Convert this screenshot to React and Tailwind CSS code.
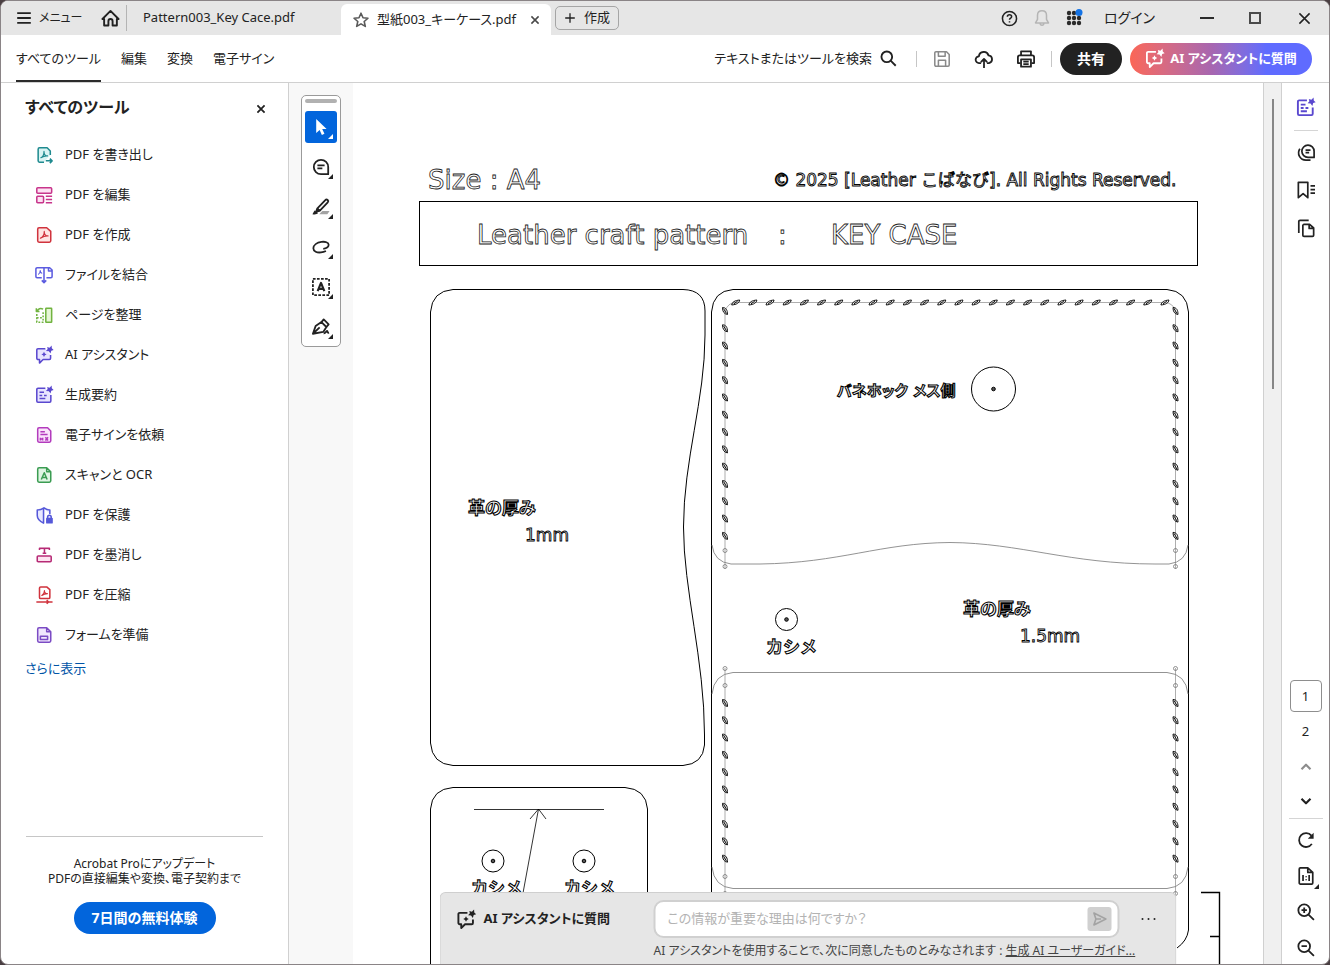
import { useState } from "react";
import clsx from "clsx";

const acrobatMark = <path d="M6 13.500c2.500-1.200 4.300-4.500 4.300-7.500 0 3 1.700 5 4.200 5-3.200-.3-5.700.8-8.500 2.500z" strokeWidth="1.300" />;

const sparkle = (
  <path
    d="M13.500 1l2.700.9L18.500-.5l.2 3 2 2-2.600.8-.9 3-1.900-2.500-3.100-.2 1.900-2.300z"
    fill="currentColor"
    stroke="none"
  />
);

const ICONS = {
  export: (
    <>
      <path d="M17 10V5.500L13.500 2H5a1.500 1.500 0 0 0-1.500 1.500v13A1.500 1.500 0 0 0 5 18h5" />
      <path d="M6.500 13c2-1 3.500-4 3.500-7 0 3 1.500 5 4 5-3-.5-5 .5-7.500 2z" strokeWidth="1.300" />
      <path d="M12 16.500h7M16.500 14l2.500 2.500-2.500 2.500" />
    </>
  ),
  edit: (
    <>
      <rect x="2" y="2" width="16.500" height="6" rx="1" />
      <rect x="2" y="11.500" width="7.500" height="7" rx="1" />
      <path d="M12 11.500h7M12 15h7M12 18.500h7" />
    </>
  ),
  create: (
    <>
      <path d="M3 3.500A1.500 1.500 0 0 1 4.500 2H13l4.500 4v10.500A1.500 1.500 0 0 1 16 18H4.500A1.500 1.500 0 0 1 3 16.500z" />
      {acrobatMark}
    </>
  ),
  combine: (
    <>
      <path d="M7.500 13H2.300A1.300 1.300 0 0 1 1 11.700V3.300A1.300 1.300 0 0 1 2.300 2h14L19 4.500v7.200a1.300 1.300 0 0 1-1.300 1.300h-5M10 2v16.500M7.500 16l2.500 2.500 2.500-2.500M15 2v3.500h3.500" />
      <path d="M3.500 9.500c1.500-.8 2.300-2.500 2.300-4.500 0 2 1 3 2.200 3" strokeWidth="1.200" />
    </>
  ),
  organize: (
    <>
      <rect x="12" y="2.500" width="6.500" height="15.500" rx=".5" fill="#e6f6d6" />
      <path d="M9 3.500C6 2 3.500 3 2.500 5.500M1.500 2.500v3.500h3.500" />
      <path d="M2 9v9h8M9 7v11" strokeDasharray="2 1.600" />
      <path d="M2 13h7" strokeDasharray="2 1.600" />
    </>
  ),
  assistant: (
    <>
      <path d="M11.500 3H3.300A1.300 1.300 0 0 0 2 4.300v9.400A1.300 1.300 0 0 0 3.300 15H5v4l4-4h7a1.300 1.300 0 0 0 1.300-1.300V10" />
      <path d="M10 6.500l1 1.900 1.900 1-1.900 1-1 1.900-1-1.900-1.900-1 1.900-1z" fill="currentColor" stroke="none" />
      {sparkle}
    </>
  ),
  summary: (
    <>
      <path d="M11.500 2.500H3.300A1.300 1.300 0 0 0 2 3.800v12.900A1.300 1.300 0 0 0 3.300 18h13a1.300 1.300 0 0 0 1.300-1.300V10" />
      <path d="M5 7h5M5 10.500h3M10 10.500h3M5 14h6.500" />
      {sparkle}
    </>
  ),
  sign: (
    <>
      <path d="M3 3.500A1.500 1.500 0 0 1 4.500 2H14l3.500 3.500v11A1.500 1.500 0 0 1 16 18H4.500A1.500 1.500 0 0 1 3 16.500z" />
      <path d="M6 6.500h5M6 9.500h8M6 13v3M8.500 13v3M8.500 14.500H6M11.500 12.500l3 3.500M14.500 12.500l-3 3.500" />
    </>
  ),
  scan: (
    <>
      <path d="M3 3.500A1.500 1.500 0 0 1 4.500 2H13l4.500 4.500v10A1.500 1.500 0 0 1 16 18H4.500A1.500 1.500 0 0 1 3 16.500zM13 2v4.500h4.500" />
      <path d="M7 15l3.300-7.500L13.500 15M8.200 12.800h4" />
    </>
  ),
  protect: (
    <>
      <path d="M16.500 9V4.500C14 4.500 12 3.500 10 2 8 3.500 5.500 4.500 2.500 4.500v6c0 4 3 6.500 7 8.500V2.500" />
      <path d="M14 13.500v-1.200a2 2 0 0 1 4 0v1.200" />
      <rect x="12.300" y="13" width="7.500" height="6.500" rx="1" fill="currentColor" stroke="none" />
    </>
  ),
  redact: (
    <>
      <path d="M5 4.500V2.500h11v2M10.500 2.500V8M8.500 8h4" />
      <rect x="2.500" y="11" width="15.500" height="6.500" rx="1" />
    </>
  ),
  compress: (
    <>
      <path d="M5 2.300A1.300 1.300 0 0 1 6.300 1H13L16.500 4v8.700a1.300 1.300 0 0 1-1.300 1.300H6.300A1.300 1.300 0 0 1 5 12.700z" />
      <path d="M7.500 10.500c2-1 3-3.200 3-5.500 0 2.300 1.300 3.500 3.300 3.500-2.500 0-4.300.7-6.300 2z" strokeWidth="1.200" />
      <path d="M1.500 17.700h18M13 15.700l2 2-2 2" />
    </>
  ),
  form: (
    <>
      <path d="M3 3.500A1.500 1.500 0 0 1 4.500 2H13l4.500 4.500v10A1.500 1.500 0 0 1 16 18H4.500A1.500 1.500 0 0 1 3 16.500zM13 2v4.500h4.500" />
      <rect x="6" y="11.500" width="8" height="3.500" />
    </>
  ),
  menu: <path d="M1.500 4h17M1.500 10h17M1.500 16h17" />,
  home: <path d="M1.500 10.500L10 2l8.500 8.500h-1.800v6.800h-4.500v-4.500a2.200 2.200 0 0 0-4.400 0v4.500H3.300v-6.800z" />,
  star: <path d="M10 1.500l2.500 5.700 6.200.6-4.700 4.100 1.400 6.100L10 14.800 4.600 18 6 11.900 1.300 7.800l6.200-.6z" />,
  close: <path d="M4 4l12 12M16 4L4 16" />,
  plus: <path d="M10 2v16M2 10h16" />,
  help: (
    <>
      <circle cx="10" cy="10" r="8.300" />
      <path d="M7.500 7.800C7.500 6.500 8.600 5.600 10 5.600s2.500.9 2.500 2.200c0 1.700-2.500 1.800-2.500 3.700M10 13.300v1.500" />
    </>
  ),
  bell: <path d="M10 2c-3 0-5 2-5 5v4.500L2.800 15.500h14.400L15 11.500V7c0-3-2-5-5-5zM8 15.800a2 2.200 0 0 0 4 0" />,
  search: (
    <>
      <circle cx="8" cy="8" r="6.300" />
      <path d="M12.500 12.500l6 6" />
    </>
  ),
  save: (
    <>
      <path d="M2 3.300A1.300 1.300 0 0 1 3.300 2H15l3 3v11.700a1.300 1.300 0 0 1-1.300 1.300H3.300A1.300 1.300 0 0 1 2 16.700z" />
      <path d="M6 2v5h7.500V2M6 18v-6.500h8V18" />
    </>
  ),
  cloud: (
    <>
      <path d="M6.800 14.500H4.500a3.700 3.700 0 0 1-.2-7.400A5.500 5.500 0 0 1 15 6a4.300 4.300 0 0 1 .5 8.500H13.200" />
      <path d="M10 20v-9.500M6.500 13.500L10 10l3.500 3.500" />
    </>
  ),
  print: (
    <>
      <path d="M4.500 6V1.500h11V6M4 14.500H1V8a2 2 0 0 1 2-2h14a2 2 0 0 1 2 2v6.500H16" />
      <path d="M4.500 10.500h11v8h-11zM7 13h6M7 15.700h6" />
    </>
  ),
  comment: (
    <>
      <path d="M18 18h-8a8 8 0 1 1 8-8z" />
      <path d="M6 8.200h8M6 11.500h5.500" />
    </>
  ),
  highlight: (
    <>
      <path d="M8 18h9l2.500-3.500h-8z" fill="#a3a3a3" stroke="none" />
      <path d="M6 11.500L14.800 2.300a1.700 1.700 0 0 1 2.700 2.500L8.500 14.200zM6 11.500l-1.500 3.500 4-.8" />
      <path d="M.5 18l2.300-4.200 4.200 3c-1.500 1.500-4 2-6.500 1.200z" fill="currentColor" stroke="none" />
    </>
  ),
  lasso: <path d="M12.500 12c3.500-.5 6-2 6-4.500 0-2.700-4-3.700-8-3.200C5.500 5 1.500 7.800 1.500 11.500c0 3.500 4 5 8.500 4.500 2-.2 4-.8 5.500-1.500" />,
  textbox: (
    <>
      <rect x="1" y="1" width="18" height="18" strokeDasharray="3 1.500" />
      <path d="M6.300 14.500l3.700-9 3.700 9M7.700 12h4.600" strokeWidth="2.400" />
    </>
  ),
  pen: (
    <>
      <path d="M1 17.500L4 9l6.500-4.500 5.500 5.500-3.500 5.500zM1 17.500L8.500 10.500" />
      <path d="M10.500 4.500L13 1.500 18.500 7 16 10M13 17c2 .5 3-3 4-2.500s-.5 2.500 2 2" />
    </>
  ),
  comments: (
    <>
      <path d="M19 16h-6.700A6.800 6.800 0 1 1 19 9.200z" />
      <path d="M9.500 7.800h5.500M9.500 10.800h4M3.200 6.500C-.5 12 3.500 19 10 19h5" />
    </>
  ),
  bookmark: <path d="M1.500 1.500h10.500v17l-5.200-4.500-5.300 4.500zM15 5.500h5M15 9.500h5M15 13.500h5" />,
  pages: (
    <>
      <path d="M6.500 7.300A1.300 1.300 0 0 1 7.800 6H14l4.500 4v8a1.300 1.300 0 0 1-1.300 1.300H7.800A1.300 1.300 0 0 1 6.500 18zM13.500 6v4.500h5" />
      <path d="M2 15.500V2.800a1.300 1.300 0 0 1 1.300-1.300H13" />
    </>
  ),
  up: <path d="M5 12.500l5-5 5 5" />,
  down: <path d="M5 7.500l5 5 5-5" />,
  rotate: (
    <>
      <path d="M16.500 14.300A7.700 7.700 0 1 1 16 5.200" />
      <path d="M18.500 2v6.500H12z" fill="currentColor" stroke="none" />
    </>
  ),
  actual: (
    <>
      <path d="M2.500 2.300A1.300 1.300 0 0 1 3.800 1H12l5.500 5v11.700a1.300 1.300 0 0 1-1.300 1.300H3.800a1.300 1.300 0 0 1-1.300-1.300zM12 1v5h5.500" />
      <path d="M6.700 9v6.500M13.500 9v6.500M10.200 10.200v1.300M10.200 13.500v1.300" />
    </>
  ),
  zoomIn: (
    <>
      <circle cx="8" cy="8" r="6.500" />
      <path d="M12.800 12.800l6 6M5 8h6M8 5v6" />
    </>
  ),
  zoomOut: (
    <>
      <circle cx="8" cy="8" r="6.500" />
      <path d="M12.800 12.800l6 6M5 8h6" />
    </>
  ),
  send: <path d="M3 2.500l15 7.500-15 7.500 2.500-7.500zM5.500 10H12" />
};

function Icon({ name, className = "size-5", fill = "none", weight = 1.7 }) {
  return (
    <svg
      viewBox="0 0 20 20"
      className={clsx("shrink-0 overflow-visible", className)}
      fill={fill}
      stroke="currentColor"
      strokeWidth={weight}
      strokeLinejoin="round"
      aria-hidden="true"
    >
      {ICONS[name]}
    </svg>
  );
}

const tools = [
  { label: "PDF を書き出し", icon: "export", color: "text-[#1f8a8f]", fill: "#d9f4f3" },
  { label: "PDF を編集", icon: "edit", color: "text-[#c8358b]", fill: "#fde3f3" },
  { label: "PDF を作成", icon: "create", color: "text-[#d0333d]", fill: "#ffe5e3" },
  { label: "ファイルを結合", icon: "combine", color: "text-[#5c5ce0]", fill: "none" },
  { label: "ページを整理", icon: "organize", color: "text-[#71b340]", fill: "none" },
  { label: "AI アシスタント", icon: "assistant", color: "text-[#5a48cf]", fill: "#e7e4ff" },
  { label: "生成要約", icon: "summary", color: "text-[#5a48cf]", fill: "#e7e4ff" },
  { label: "電子サインを依頼", icon: "sign", color: "text-[#b33bbd]", fill: "#fae4fb" },
  { label: "スキャンと OCR", icon: "scan", color: "text-[#3b9c52]", fill: "#e0f5e3" },
  { label: "PDF を保護", icon: "protect", color: "text-[#5558d9]", fill: "#e8e9ff" },
  { label: "PDF を墨消し", icon: "redact", color: "text-[#b62a75]", fill: "#fde3f0" },
  { label: "PDF を圧縮", icon: "compress", color: "text-[#d0333d]", fill: "none" },
  { label: "フォームを準備", icon: "form", color: "text-[#7b4bc4]", fill: "#f0e6fd" }
];

const quickTools = [
  { icon: "comment", label: "コメント" },
  { icon: "highlight", label: "ハイライト" },
  { icon: "lasso", label: "描画" },
  { icon: "textbox", label: "テキスト" },
  { icon: "pen", label: "署名" }
];

function Corner({ className }) {
  return (
    <svg viewBox="0 0 5 5" className={clsx("absolute size-[5px]", className)} fill="currentColor" aria-hidden="true">
      <path d="M5 0v5H0z" />
    </svg>
  );
}

function TitleBar() {
  return (
    <header className="flex h-[34px] shrink-0 items-center bg-[#e6e6e6] text-[13px] whitespace-nowrap">
      <button className="ml-[15px] flex w-[71px] items-center gap-[7px]">
        <Icon name="menu" className="size-4" weight={2.2} />
        <span className="text-xs">メニュー</span>
      </button>
      <button aria-label="ホーム" className="ml-3.5">
        <Icon name="home" className="size-[19px]" weight={2} />
      </button>
      <div className="ml-1.5 h-[26px] w-px bg-[#b4b4b4]" />
      <button className="w-[214px] pl-4 text-left">Pattern003_Key Cace.pdf</button>
      <div className="flex h-full items-end pt-[3px]">
        <div className="flex h-full w-[210px] items-center rounded-t-md bg-white pr-2.5 pl-3">
          <Icon name="star" className="mr-2 size-4 text-[#5a5a5a]" weight={2} />
          <span>型紙003_キーケース.pdf</span>
          <button aria-label="閉じる" className="ml-auto">
            <Icon name="close" className="size-3 text-[#4a4a4a]" weight={2.6} />
          </button>
        </div>
      </div>
      <button className="ml-1 flex h-6 w-16 items-center justify-center gap-2 rounded-[5px] border border-[#a5a5a5]">
        <Icon name="plus" className="size-3" weight={2.2} />
        作成
      </button>
      <div className="ml-auto flex items-center">
        <button aria-label="ヘルプ" className="w-8">
          <Icon name="help" className="mx-auto size-[17px]" weight={1.8} />
        </button>
        <button aria-label="通知" className="w-8 text-[#b5b5b5]">
          <Icon name="bell" className="mx-auto size-[18px]" />
        </button>
        <button aria-label="アプリ" className="w-8">
          <svg viewBox="0 0 18 18" className="mx-auto size-[18px]" aria-hidden="true">
            {[4, 9, 14].map((y) => [4, 9, 14].map((x) => (
              <circle key={`${x}-${y}`} cx={x} cy={y} r="2.200" fill="#2b2b2b" />
            )))}
            <circle cx="14" cy="3.500" r="3.500" fill="#1473e6" />
          </svg>
        </button>
        <button className="ml-3.5 text-sm">ログイン</button>
        <button aria-label="最小化" className="ml-7 flex w-12 justify-center">
          <span className="h-0.5 w-3.5 bg-[#2b2b2b]" />
        </button>
        <button aria-label="最大化" className="flex w-12 justify-center">
          <span className="size-3 border-2 border-[#4a4a4a]" />
        </button>
        <button aria-label="ウィンドウを閉じる" className="flex w-[50px] justify-center">
          <Icon name="close" className="size-[17px]" weight={1.8} />
        </button>
      </div>
    </header>
  );
}

function Toolbar() {
  return (
    <div className="flex h-12 shrink-0 items-center border-b border-[#d0d0d0] text-[13px] whitespace-nowrap">
      <nav className="ml-[15px] flex h-full gap-5">
        <button className="border-b-2 border-[#2b2b2b] pt-0.5">すべてのツール</button>
        <button>編集</button>
        <button>変換</button>
        <button>電子サイン</button>
      </nav>
      <button className="ml-auto flex items-center gap-2">
        テキストまたはツールを検索
        <Icon name="search" className="size-[17px]" weight={2.2} />
      </button>
      <div className="ml-[19px] h-4 w-px bg-[#c6c6c6]" />
      <div className="mx-4 flex items-center gap-6">
        <button aria-label="保存" className="text-[#8a8a8a]">
          <Icon name="save" className="size-[18px]" />
        </button>
        <button aria-label="アップロード">
          <Icon name="cloud" className="size-[18px]" weight={2} />
        </button>
        <button aria-label="印刷">
          <Icon name="print" className="size-[18px]" weight={2} />
        </button>
      </div>
      <div className="mr-2 h-4 w-px bg-[#c6c6c6]" />
      <button className="h-8 w-[62px] rounded-full bg-[#222] text-sm font-bold text-white">共有</button>
      <button className="mr-[17px] ml-2 flex h-8 w-[182px] items-center justify-center gap-1.5 rounded-full bg-linear-to-r from-[#fb6655] via-[#a766b0] via-45% to-[#5f6bff] to-75% font-bold text-white">
        <Icon name="assistant" className="size-[19px]" weight={1.9} />
        AI アシスタントに質問
      </button>
    </div>
  );
}

function Sidebar() {
  return (
    <aside className="flex w-72 shrink-0 flex-col border-r border-[#d0d0d0]">
      <div className="flex h-[52px] items-center justify-between pr-[21px] pb-1 pl-6">
        <h2 className="text-base font-bold">すべてのツール</h2>
        <button aria-label="パネルを閉じる" className="pt-1">
          <Icon name="close" className="size-3" weight={3} />
        </button>
      </div>
      <ul className="text-[13px]">
        {tools.map((tool) => (
          <li key={tool.label}>
            <button className="flex h-10 w-full items-center gap-3 pl-[34px]">
              <Icon name={tool.icon} className={clsx("size-[18px]", tool.color)} fill={tool.fill} />
              {tool.label}
            </button>
          </li>
        ))}
      </ul>
      <a href="#more" className="ml-6 py-1 text-[13px] text-[#0054a6]">さらに表示</a>
      <div className="mx-[25px] mt-auto mb-[30px] flex flex-col items-center border-t border-[#c6c6c6] pt-[19px]">
        <p className="text-center text-xs leading-[15px]">
          Acrobat Proにアップデート
          <br />
          PDFの直接編集や変換、電子契約まで
        </p>
        <button className="mt-4 h-8 w-[142px] rounded-full bg-[#0265dc] text-sm font-bold text-white">
          7日間の無料体験
        </button>
      </div>
    </aside>
  );
}

function QuickTools() {
  return (
    <div className="flex w-16 shrink-0 justify-center bg-[#f8f8f8] pt-3">
      <div className="flex h-[252px] w-10 flex-col items-center rounded-[5px] border border-[#9a9a9a] bg-white pt-[3px]">
        <div className="mb-2 h-1 w-8 shrink-0 rounded-full bg-[#b1b1b1]" />
        <button aria-label="選択" className="relative size-8 shrink-0 rounded-[3px] bg-[#0265dc] text-white">
          <svg viewBox="0 0 20 20" className="mx-auto size-4" fill="currentColor" aria-hidden="true">
            <path d="M4 0v17.500l4.300-3.800 2.800 6.300 3.200-1.500-2.800-6h5.500z" />
          </svg>
          <Corner className="right-1 bottom-1" />
        </button>
        {quickTools.map((tool) => (
          <button key={tool.icon} aria-label={tool.label} className="relative mt-2 flex size-8 shrink-0 items-center justify-center">
            <Icon name={tool.icon} className="size-[18px]" weight={2} />
            <Corner className="right-1 bottom-1" />
          </button>
        ))}
      </div>
    </div>
  );
}

function Stitches({ x, y, count, dx = 0, dy = 0, d }) {
  return Array.from({ length: count }, (_, i) => (
    <path key={i} d={d} transform={`translate(${x + dx * i} ${y + dy * i})`} />
  ));
}

const stitchFlat = "M-4 2.500C-3.500-.5-1-2 4-2.500 3.500.5 1 2-4 2.500z M-2 1.500L2-1.500";
const stitchSide = "M-2.500-3.500C1-3.500 2.500-1 2.500 3.500-1 3-2.500 .5-2.500-3.500z M-1.500-2.500L1.500 2.500";

function Rivet({ x, y, r = 11 }) {
  return (
    <g stroke="#000" fill="none">
      <circle cx={x} cy={y} r={r} />
      <circle cx={x} cy={y} r="1.800" fill="#555" />
    </g>
  );
}

function PatternSheet() {
  return (
    <svg viewBox="353 83 910 1287" className="mx-auto w-[910px] shrink-0" fill="none" role="img" aria-label="キーケースの型紙">
      <g stroke="#000">
        <rect x="419.500" y="201.500" width="778" height="64" />
        <path d="M453 289.500H683Q705 290 705 311V335C705 400 683.500 460 683.500 527C683.500 590 704.500 660 704.500 735V745Q703 764 683 765.500H453Q432 764 430.500 743V312Q432 291 453 289.500z" />
        <path d="M430.500 1100V809Q432 789 453 787.500H625Q646 789 647.500 809V1100" />
        <path d="M711.500 1100V312Q713 291 733 289.500H1167Q1187 291 1188.500 312V930Q1187 941 1177 948" />
        <path d="M474 809.500H604M538.500 809L523 893M530 819l8.500-10 7.500 10" strokeWidth=".8" />
        <path d="M1201 892.500H1219.500V1100M1210 936.500H1219" strokeWidth="1.400" />
      </g>

      <g stroke="#777" strokeWidth=".8">
        <path d="M712 545Q714 562 731 564H760C840 563 880 543 950 542.500C1020 543 1070 564 1155 564H1169Q1186 562 1188 545" />
        <path d="M712 694Q714 674 733 672.500H1167Q1186 674 1188 694M712 867Q714 887 733 888.500H1167Q1186 887 1188 867" />
        <path d="M725 569V311Q728 303 735 302.500H1165Q1173 303 1175.500 311V569M725 668V896M1175.500 668V896" strokeWidth=".6" />
        {[725, 1175.5].map((x) => [550.5, 566.5, 668.5, 685.5, 876.5, 893.5].map((y) => (
          <circle key={`${x}-${y}`} cx={x} cy={y} r="2" />
        )))}
      </g>

      <g stroke="#111">
        <Stitches x={735.7} y={302.5} dx={17.17} count={26} d={stitchFlat} />
        {[725, 1175.5].map((x) => (
          <g key={x}>
            <Stitches x={x} y={311} dy={17.3} count={14} d={stitchSide} />
            <Stitches x={x} y={703} dy={17.3} count={10} d={stitchSide} />
          </g>
        ))}
      </g>

      <Rivet x={993.5} y={389} r={22} />
      <Rivet x={786.5} y={619.5} />
      <Rivet x={493} y={861} />
      <Rivet x={584} y={861} />

      {/* outlined lettering */}
      <g
        className="font-['DejaVu_Sans','Noto_Sans_CJK_JP',sans-serif] [font-feature-settings:normal]"
        fill="#fff"
        stroke="#222"
        strokeWidth=".8"
        opacity=".99"
      >
        <g fontSize="26">
          <text x="428" y="189">Size : A4</text>
          <text x="477" y="244">Leather craft pattern</text>
          <text x="778" y="244">:</text>
          <text x="831" y="244">KEY CASE</text>
        </g>
        <g fontSize="17" stroke="#000" strokeWidth=".9">
          <text x="773" y="186">© 2025 [Leather こばなび]. All Rights Reserved.</text>
          <text x="525" y="541">1mm</text>
          <text x="1020" y="642">1.5mm</text>
        </g>
        <g fontSize="17" fontWeight="700" stroke="#000" strokeWidth="1.100">
          <text x="837" y="396" fontSize="15" className="[font-feature-settings:'palt']">バネホック メス側</text>
          <text x="468" y="514">革の厚み</text>
          <text x="963" y="615">革の厚み</text>
          <text x="766" y="653">カシメ</text>
          <text x="471" y="894">カシメ</text>
          <text x="564" y="894">カシメ</text>
        </g>
      </g>
    </svg>
  );
}

function AssistantPanel() {
  const [question, setQuestion] = useState("");

  return (
    <form
      onSubmit={(e) => e.preventDefault()}
      className="absolute bottom-0 left-1/2 h-[72px] w-[737px] -translate-x-1/2 rounded-t-md border border-b-0 border-[#cfcfcf] bg-[#e6e6e6] pt-[7px] pl-4 whitespace-nowrap"
    >
      <div className="flex h-[38px] items-center">
        <label htmlFor="question" className="flex w-[197px] items-center gap-2 text-[13px] font-bold">
          <Icon name="assistant" className="size-[19px]" weight={2} />
          AI アシスタントに質問
        </label>
        <div className="flex h-[38px] w-[466px] items-center rounded-[10px] border-2 border-[#d0d0d0] bg-white pr-1.5 pl-3">
          <input
            id="question"
            value={question}
            onChange={(e) => setQuestion(e.target.value)}
            placeholder="この情報が重要な理由は何ですか？"
            className="flex-1 text-[13px] outline-none placeholder:text-[#b3b3b3]"
          />
          <button aria-label="送信" className="flex size-6 items-center justify-center rounded-[3px] bg-[#d0d0d0] text-[#a3a3a3]">
            <Icon name="send" className="size-4" weight={2} />
          </button>
        </div>
        <button aria-label="その他" className="ml-[22px] flex gap-1">
          <span className="size-0.5 rounded-full bg-[#222]" />
          <span className="size-0.5 rounded-full bg-[#222]" />
          <span className="size-0.5 rounded-full bg-[#222]" />
        </button>
      </div>
      <p className="ml-[197px] pt-[3px] text-xs leading-5 text-[#444]">
        AI アシスタントを使用することで、次に同意したものとみなされます : <a href="#guide" className="underline">生成 AI ユーザーガイド...</a>
      </p>
    </form>
  );
}

function RightRail() {
  return (
    <aside className="flex w-12 shrink-0 flex-col items-center border-l border-[#d0d0d0] text-[13px]">
      <button aria-label="生成要約" className="mt-[15px] text-[#5a48cf]">
        <Icon name="summary" className="size-[19px]" weight={2} />
      </button>
      <div className="mt-[13px] h-px w-6 bg-[#d5d5d5]" />
      <div className="mt-3 flex flex-col gap-5">
        <button aria-label="コメント">
          <Icon name="comments" className="size-[18px]" weight={1.9} />
        </button>
        <button aria-label="しおり">
          <Icon name="bookmark" className="size-[18px]" weight={1.9} />
        </button>
        <button aria-label="ページ">
          <Icon name="pages" className="size-[18px]" weight={1.9} />
        </button>
      </div>

      <input aria-label="ページ番号" defaultValue="1" className="mt-auto size-8 rounded-[4px] border border-[#8e8e8e] text-center" />
      <span className="mt-2 leading-[22px]">2</span>
      <div className="mt-4 flex flex-col gap-4">
        <button aria-label="前のページ" className="text-[#8e8e8e]">
          <Icon name="up" className="size-[18px]" weight={2.4} />
        </button>
        <button aria-label="次のページ">
          <Icon name="down" className="size-[18px]" weight={2.4} />
        </button>
      </div>
      <div className="mt-2 h-px w-[34px] bg-[#d5d5d5]" />
      <div className="mt-3 mb-[7px] flex flex-col gap-[18px]">
        <button aria-label="回転">
          <Icon name="rotate" className="size-[18px]" weight={2} />
        </button>
        <button aria-label="実際のサイズ" className="relative">
          <Icon name="actual" className="size-[18px]" weight={1.9} />
          <Corner className="-right-1 -bottom-1" />
        </button>
        <button aria-label="ズームイン">
          <Icon name="zoomIn" className="size-[18px]" weight={2} />
        </button>
        <button aria-label="ズームアウト">
          <Icon name="zoomOut" className="size-[18px]" weight={2} />
        </button>
      </div>
    </aside>
  );
}

function App() {
  return (
    <div className="h-screen bg-[#4a3f42]">
      <div className="flex h-full flex-col overflow-hidden rounded-lg border border-[#8a8486] bg-white font-['Noto_Sans','Noto_Sans_CJK_JP',sans-serif] text-[#222] [font-feature-settings:'palt']">
        <TitleBar />
        <Toolbar />
        <div className="flex min-h-0 flex-1">
          <Sidebar />
          <QuickTools />
          <main className="relative flex min-w-0 flex-1 items-start overflow-hidden">
            <PatternSheet />
            <AssistantPanel />
          </main>
          <div className="flex w-[18px] shrink-0 justify-center border-l border-[#d0d0d0] bg-[#f0f0f0] pt-4">
            <div className="h-[290px] w-0.5 bg-[#868686]" />
          </div>
          <RightRail />
        </div>
      </div>
    </div>
  );
}

export default App;
